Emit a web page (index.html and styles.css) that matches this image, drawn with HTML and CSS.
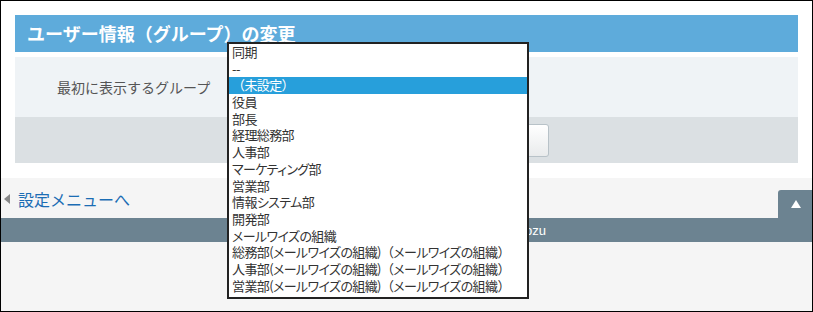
FILE: index.html
```html
<!DOCTYPE html>
<html lang="ja">
<head>
<meta charset="utf-8">
<link rel="stylesheet" href="styles.css">
</head>
<body>
<div class="frame">
  <div class="main">
    <h1 class="title">ユーザー情報（グループ）の変更</h1>
    <div class="form-row">
      <div class="label">最初に表示するグループ</div>
    </div>
    <div class="actions">
      <button class="btn"><span>変更する</span></button>
    </div>
  </div>
  <div class="nav">
    <a class="back" href="#"><span class="tri"></span>設定メニューへ</a>
    <div class="pagetop"><span class="up"></span></div>
  </div>
  <div class="footer"><span class="copy">Copyright (C) Cybozu</span></div>
  <div class="rest"></div>

  <ul class="popup">
    <li>同期</li>
    <li>--</li>
    <li class="sel"><span class="fw">（</span>未設定<span class="fw">）</span></li>
    <li>役員</li>
    <li>部長</li>
    <li>経理総務部</li>
    <li>人事部</li>
    <li>マーケティング部</li>
    <li>営業部</li>
    <li>情報システム部</li>
    <li>開発部</li>
    <li>メールワイズの組織</li>
    <li>総務部(メールワイズの組織)<span class="fw">（</span>メールワイズの組織<span class="fw">）</span></li>
    <li>人事部(メールワイズの組織)<span class="fw">（</span>メールワイズの組織<span class="fw">）</span></li>
    <li>営業部(メールワイズの組織)<span class="fw">（</span>メールワイズの組織<span class="fw">）</span></li>
  </ul>
</div>
</body>
</html>
```
FILE: styles.css
```css
* { box-sizing: border-box; }
html, body { margin: 0; padding: 0; }
body {
  font-family: "Noto Sans CJK JP", "Noto Sans", sans-serif;
  background: #fff;
}
.frame {
  position: relative;
  width: 813px;
  height: 312px;
  border: 1px solid #000;
  display: flex;
  flex-direction: column;
  overflow: hidden;
}
.main {
  padding: 14px 14px 15px 14px;
  background: #fff;
}
.title {
  margin: 0;
  height: 37px;
  background: #5eabdb;
  color: #fff;
  font-size: 18px;
  font-weight: bold;
  line-height: 37px;
  padding-left: 12px;
}
.form-row {
  margin-top: 5px;
  height: 60px;
  background: #eff3f6;
  display: flex;
  align-items: center;
  padding-left: 42px;
}
.label {
  font-size: 14px;
  color: #555;
}
.actions {
  height: 46px;
  background: #dbe0e3;
  display: flex;
  align-items: center;
  padding-left: 430px;
}
.btn {
  width: 104px;
  height: 33px;
  border: 1px solid #b8c2c8;
  border-radius: 3px;
  background: linear-gradient(#ffffff, #e9ebec);
  color: #1b6db4;
  font-family: inherit;
  font-size: 13px;
  padding: 0;
}
.nav {
  height: 40px;
  background: #f5f5f5;
  display: flex;
  justify-content: space-between;
  align-items: flex-end;
}
.back {
  align-self: center;
  color: #1b6db4;
  text-decoration: none;
  font-size: 16px;
  display: flex;
  align-items: center;
  padding-left: 3px;
  margin-top: 2px;
}
.tri {
  width: 0;
  height: 0;
  border-top: 5px solid transparent;
  border-bottom: 5px solid transparent;
  border-right: 6px solid #888;
  margin-right: 8px;
}
.pagetop {
  width: 34px;
  height: 28px;
  background: #6c8391;
  border-top-left-radius: 3px;
  display: flex;
  justify-content: center;
  align-items: center;
}
.up {
  width: 0;
  height: 0;
  border-left: 5px solid transparent;
  border-right: 5px solid transparent;
  border-bottom: 8px solid #fff;
  margin-left: 2px;
}
.footer {
  height: 24px;
  background: #6c8391;
  color: #fff;
  font-family: "Liberation Sans", sans-serif;
  font-size: 13px;
  display: flex;
  align-items: center;
  padding-left: 420px;
}
.rest {
  flex: 1;
  background: #f5f5f5;
}
.popup {
  position: absolute;
  left: 226px;
  top: 41px;
  width: 302px;
  height: 257px;
  margin: 0;
  padding: 0;
  list-style: none;
  background: #fff;
  border: 2px solid #222;
  overflow: hidden;
}
.popup li {
  height: 16.7px;
  line-height: 16.7px;
  font-size: 13px;
  color: #333;
  padding-left: 3px;
  white-space: nowrap;
  font-feature-settings: "palt";
  letter-spacing: -0.6px;
}
.popup li .fw {
  font-feature-settings: normal;
}
.popup li.sel {
  background: #279fdb;
  color: #fff;
}
```
